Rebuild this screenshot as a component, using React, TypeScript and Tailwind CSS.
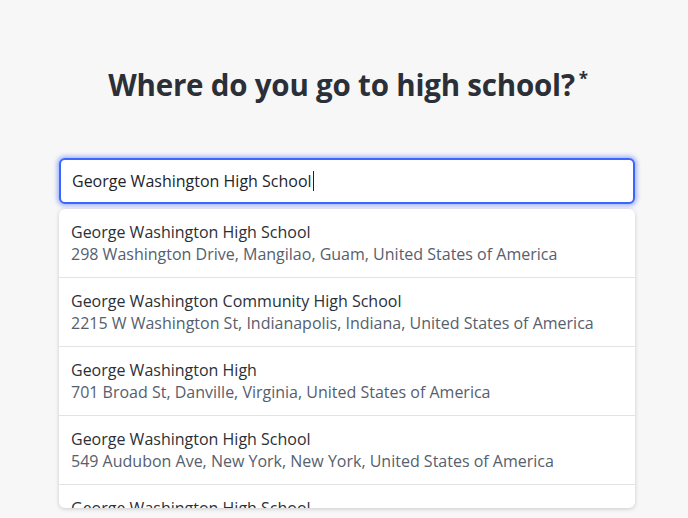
const results = [
  { name: "George Washington High School", address: "298 Washington Drive, Mangilao, Guam, United States of America" },
  { name: "George Washington Community High School", address: "2215 W Washington St, Indianapolis, Indiana, United States of America" },
  { name: "George Washington High", address: "701 Broad St, Danville, Virginia, United States of America" },
  { name: "George Washington High School", address: "549 Audubon Ave, New York, New York, United States of America" },
  { name: "George Washington High School", address: "1005 Mission St, San Francisco, California, United States of America" },
];

export default function App() {
  return (
    <div className="min-h-[518px] bg-[#f7f7f7] font-['Open_Sans',sans-serif] text-[#2b3038]">
      <h1 className="pl-[8px] pt-[63px] text-center text-[29.5px] font-bold leading-[44px] tracking-[-0.2px] text-[#2b3038]">
        Where do you go to high school?
        <span className="relative top-[-11px] ml-[4px] text-[17px] font-bold leading-none">*</span>
      </h1>

      <div className="ml-[59px] mt-[51px] w-[576px]">
        <div className="flex h-[46px] items-center rounded-[6px] border-2 border-[#3c66ff] bg-white px-[11px] shadow-[0_0_4px_2px_rgba(60,102,255,0.45)]">
          <span className="text-[16px] leading-[22px] text-[#1f2329]">George Washington High School</span>
          <span className="ml-[1px] h-[20px] w-[1px] bg-[#1f2329]" />
        </div>

        <div className="mt-[5px] h-[299px] overflow-hidden rounded-[6px] bg-white shadow-[0_1px_4px_rgba(0,0,0,0.18)]">
          {results.map((r, i) => (
            <div key={i} className="border-b border-[#e3e3e3] px-[12px] py-[12px] text-[16px] leading-[22px]">
              <div className="text-[#2b3038]">{r.name}</div>
              <div className="text-[#56606d]">{r.address}</div>
            </div>
          ))}
        </div>
      </div>
    </div>
  );
}
